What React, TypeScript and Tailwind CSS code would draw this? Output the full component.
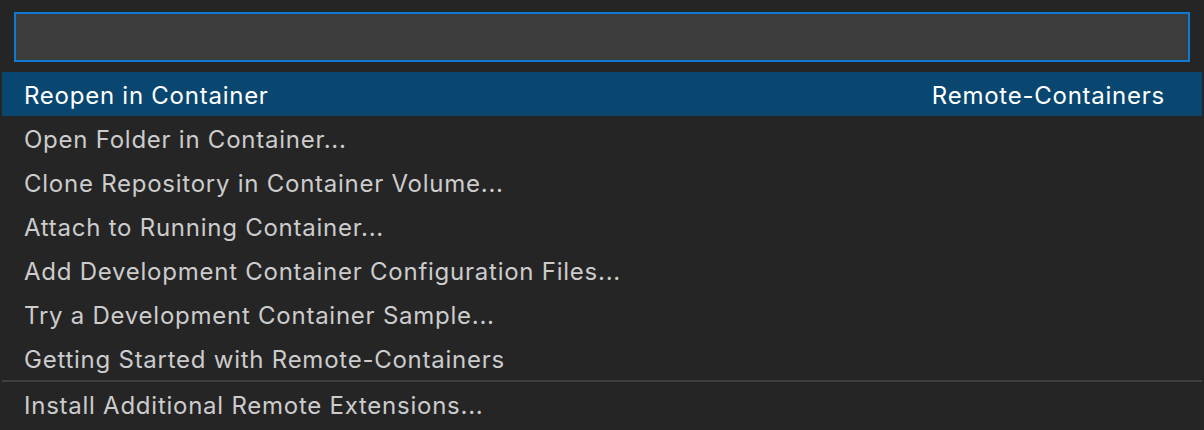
const items = [
  'Open Folder in Container...',
  'Clone Repository in Container Volume...',
  'Attach to Running Container...',
  'Add Development Container Configuration Files...',
  'Try a Development Container Sample...',
  'Getting Started with Remote-Containers',
];

export default function App() {
  return (
    <div className="h-[430px] w-[1204px] bg-[#252526] text-[24px] tracking-[0.75px] text-[#cccccc] font-['Inter',sans-serif] overflow-hidden">
      <div className="pt-3 pl-[14px] pr-[14px]">
        <div className="h-[50px] w-[1176px] border-2 border-[#0e7ad3] bg-[#3c3c3c]" />
      </div>
      <div className="mt-[10px] px-[2px]">
        <div className="flex h-[44px] items-center justify-between bg-[#094771] pt-[3px] pl-[22px] pr-[37px] text-white">
          <span>Reopen in Container</span>
          <span>Remote-Containers</span>
        </div>
        {items.map((label) => (
          <div key={label} className="flex h-[44px] items-center pt-[3px] pl-[22px]">
            {label}
          </div>
        ))}
        <div className="flex h-[46px] items-center border-t-2 border-[#3f3f42] pt-[3px] pl-[22px]">
          Install Additional Remote Extensions...
        </div>
      </div>
    </div>
  );
}
